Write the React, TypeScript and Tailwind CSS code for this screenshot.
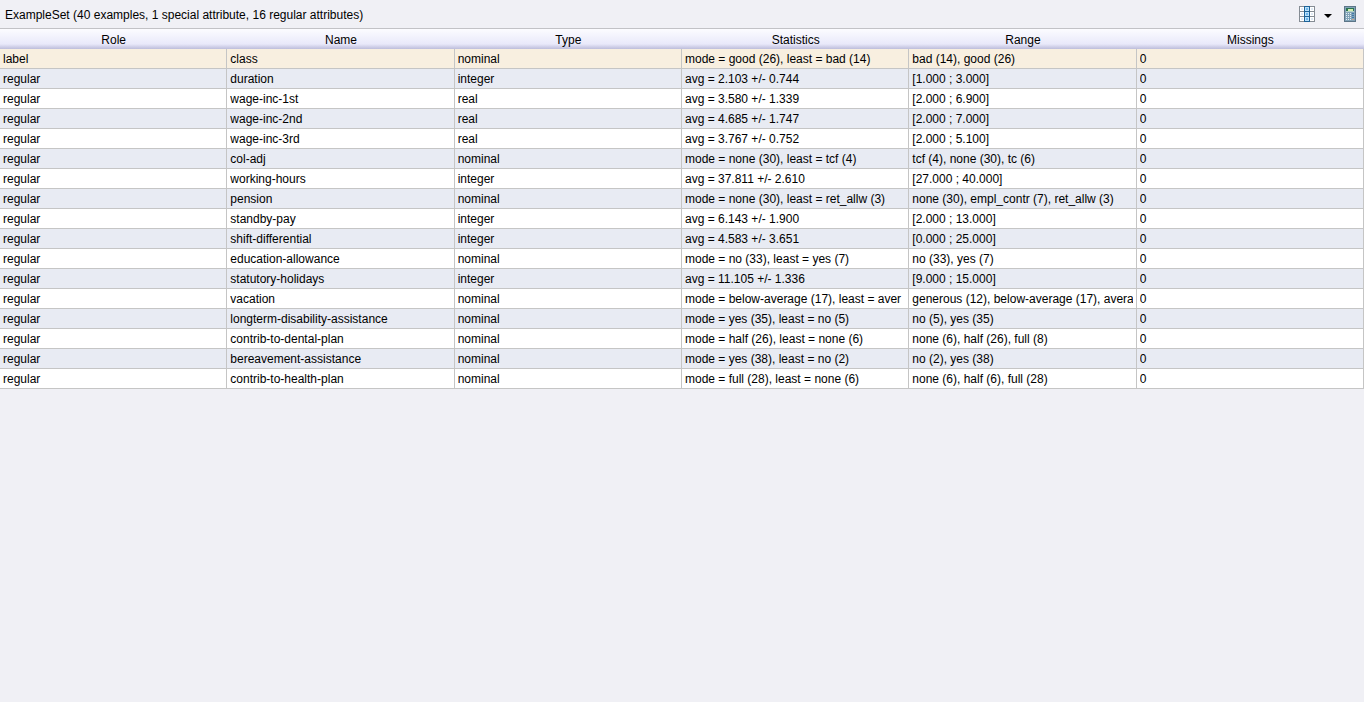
import React from "react";

const columns = ["Role", "Name", "Type", "Statistics", "Range", "Missings"];

const rows: string[][] = [
  ["label", "class", "nominal", "mode = good (26), least = bad (14)", "bad (14), good (26)", "0"],
  ["regular", "duration", "integer", "avg = 2.103 +/- 0.744", "[1.000 ; 3.000]", "0"],
  ["regular", "wage-inc-1st", "real", "avg = 3.580 +/- 1.339", "[2.000 ; 6.900]", "0"],
  ["regular", "wage-inc-2nd", "real", "avg = 4.685 +/- 1.747", "[2.000 ; 7.000]", "0"],
  ["regular", "wage-inc-3rd", "real", "avg = 3.767 +/- 0.752", "[2.000 ; 5.100]", "0"],
  ["regular", "col-adj", "nominal", "mode = none (30), least = tcf (4)", "tcf (4), none (30), tc (6)", "0"],
  ["regular", "working-hours", "integer", "avg = 37.811 +/- 2.610", "[27.000 ; 40.000]", "0"],
  ["regular", "pension", "nominal", "mode = none (30), least = ret_allw (3)", "none (30), empl_contr (7), ret_allw (3)", "0"],
  ["regular", "standby-pay", "integer", "avg = 6.143 +/- 1.900", "[2.000 ; 13.000]", "0"],
  ["regular", "shift-differential", "integer", "avg = 4.583 +/- 3.651", "[0.000 ; 25.000]", "0"],
  ["regular", "education-allowance", "nominal", "mode = no (33), least = yes (7)", "no (33), yes (7)", "0"],
  ["regular", "statutory-holidays", "integer", "avg = 11.105 +/- 1.336", "[9.000 ; 15.000]", "0"],
  ["regular", "vacation", "nominal", "mode = below-average (17), least = aver", "generous (12), below-average (17), avera", "0"],
  ["regular", "longterm-disability-assistance", "nominal", "mode = yes (35), least = no (5)", "no (5), yes (35)", "0"],
  ["regular", "contrib-to-dental-plan", "nominal", "mode = half (26), least = none (6)", "none (6), half (26), full (8)", "0"],
  ["regular", "bereavement-assistance", "nominal", "mode = yes (38), least = no (2)", "no (2), yes (38)", "0"],
  ["regular", "contrib-to-health-plan", "nominal", "mode = full (28), least = none (6)", "none (6), half (6), full (28)", "0"],
];

function rowColor(index: number) {
  if (index === 0) return "bg-[#f8efe0]";
  return index % 2 === 1 ? "bg-[#e8ebf3]" : "bg-white";
}

function ColumnsIcon() {
  return (
    <svg width="16" height="16" viewBox="0 0 16 16" shapeRendering="crispEdges" aria-hidden="true">
      <rect width="16" height="16" fill="#858c94" />
      {[1, 6, 11].map((y) => (
        <g key={y}>
          <rect x="1" y={y} width="4" height="4" fill="#ffffff" />
          <rect x="2" y={y + 1} width="2" height="2" fill="#dfeaf5" />
          <rect x="11" y={y} width="4" height="4" fill="#ffffff" />
          <rect x="12" y={y + 1} width="2" height="2" fill="#dfeaf5" />
        </g>
      ))}
      <rect x="5" y="0" width="6" height="16" fill="#1c6298" />
      {[1, 6, 11].map((y) => (
        <g key={y}>
          <rect x="6" y={y} width="4" height="4" fill="#b8e0fa" />
          <rect x="7" y={y + 1} width="2" height="2" fill="#6cb6ee" />
        </g>
      ))}
    </svg>
  );
}

function CalculatorIcon() {
  return (
    <svg width="12" height="16" viewBox="0 0 12 16" shapeRendering="crispEdges" aria-hidden="true">
      <rect width="12" height="16" fill="#5c7587" />
      <rect x="1" y="1" width="10" height="14" fill="#82a3b8" />
      <rect x="2" y="2" width="8" height="3" fill="#2c7350" />
      <rect x="4" y="3" width="5" height="2" fill="#d3edb0" />
      <rect x="2" y="5" width="8" height="1" fill="#b6d3c8" />
      {[7, 9, 11, 13].map((y) => (
        <g key={y}>
          <rect x="2" y={y} width="1" height="1" fill="#e4eef5" />
          <rect x="4" y={y} width="1" height="1" fill="#e4eef5" />
          <rect x="6" y={y} width="1" height="1" fill="#e4eef5" />
          <rect x="8" y={y} width="2" height="1" fill={y === 13 ? "#c6a58c" : "#3f78a8"} />
        </g>
      ))}
    </svg>
  );
}

export default function App() {
  return (
    <div className="min-h-screen bg-[#f0f0f5] font-['Liberation_Sans',Arial,sans-serif] text-xs text-black">
      <header className="flex h-7 items-center justify-between pr-2 pl-[5px]">
        <h1 className="pt-0.5">ExampleSet (40 examples, 1 special attribute, 16 regular attributes)</h1>
        <div className="flex items-center">
          <button type="button" aria-label="Select columns" className="flex items-center gap-[9px]">
            <ColumnsIcon />
            <svg width="8" height="4" viewBox="0 0 8 4" className="mt-[3px]" aria-hidden="true">
              <path d="M0 0h8L4 4z" fill="#000" />
            </svg>
          </button>
          <button type="button" aria-label="Calculate statistics" className="ml-3">
            <CalculatorIcon />
          </button>
        </div>
      </header>
      <table className="w-full table-fixed border-separate border-spacing-0 border-t border-[#c2c2c6]">
        <thead>
          <tr className="h-5 bg-linear-to-b from-[#fcfcff] via-[#e9e9fa] via-75% to-[#bdbddb]">
            {columns.map((name) => (
              <th key={name} scope="col" className="p-0 pt-0.5 text-center font-normal">
                {name}
              </th>
            ))}
          </tr>
        </thead>
        <tbody>
          {rows.map((row, index) => (
            <tr key={row[1]} className={rowColor(index)}>
              {row.map((value, column) => (
                <td key={columns[column]} className="h-5 border-r border-b border-[#c5c5c5] px-[3px] py-0">
                  <div className="overflow-hidden whitespace-nowrap">{value}</div>
                </td>
              ))}
            </tr>
          ))}
        </tbody>
      </table>
    </div>
  );
}
